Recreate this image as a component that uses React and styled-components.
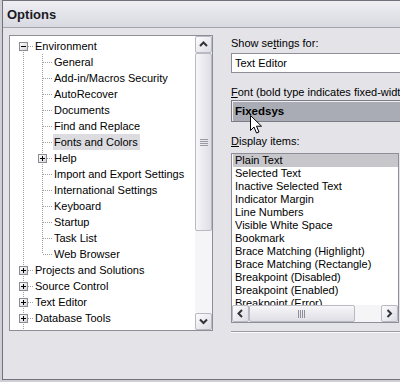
import React from 'react';
import styled, { createGlobalStyle } from 'styled-components';

const GlobalStyle = createGlobalStyle`
  html, body {
    margin: 0;
    padding: 0;
    overflow: hidden;
    background: #cfcfd5;
  }
  #root {
    width: 400px;
    height: 382px;
    overflow: hidden;
  }
  * {
    box-sizing: border-box;
  }
`;

const children = [
  'General',
  'Add-in/Macros Security',
  'AutoRecover',
  'Documents',
  'Find and Replace',
  'Fonts and Colors',
  'Help',
  'Import and Export Settings',
  'International Settings',
  'Keyboard',
  'Startup',
  'Task List',
  'Web Browser',
];

const roots = ['Projects and Solutions', 'Source Control', 'Text Editor', 'Database Tools', 'Debugging'];

const treeRows = [
  { label: 'Environment', cells: [{ bottom: true, branch: true, box: 'minus' }] },
  ...children.map((label, i) => ({
    label,
    selected: label === 'Fonts and Colors',
    cells: [
      { top: true, bottom: true },
      {
        top: true,
        bottom: i < children.length - 1,
        branch: true,
        box: label === 'Help' ? 'plus' : null,
      },
    ],
  })),
  ...roots.map(label => ({
    label,
    cells: [{ top: true, bottom: true, branch: true, box: 'plus' }],
  })),
];

const displayItems = [
  'Plain Text',
  'Selected Text',
  'Inactive Selected Text',
  'Indicator Margin',
  'Line Numbers',
  'Visible White Space',
  'Bookmark',
  'Brace Matching (Highlight)',
  'Brace Matching (Rectangle)',
  'Breakpoint (Disabled)',
  'Breakpoint (Enabled)',
  'Breakpoint (Error)',
  'Breakpoint (Warning)',
];

function Gutter({ top, bottom, branch, box }) {
  return (
    <GutterSvg width='19' height='16' shapeRendering='crispEdges'>
      {top && <line x1='9.5' y1='0' x2='9.5' y2='8' stroke='#a0a0a0' strokeDasharray='1 1' />}
      {bottom && <line x1='9.5' y1='8' x2='9.5' y2='16' stroke='#a0a0a0' strokeDasharray='1 1' />}
      {branch && <line x1='10' y1='8.5' x2='19' y2='8.5' stroke='#a0a0a0' strokeDasharray='1 1' />}
      {box && (
        <>
          <defs>
            <linearGradient id='boxFill' x1='0' y1='0' x2='1' y2='1'>
              <stop offset='0' stopColor='#ffffff' />
              <stop offset='1' stopColor='#d4d4d8' />
            </linearGradient>
          </defs>
          <rect x='5.5' y='4.5' width='8' height='8' fill='url(#boxFill)' stroke='#8a8a90' />
          <line x1='7' y1='8.5' x2='12' y2='8.5' stroke='#000' />
          {box === 'plus' && <line x1='9.5' y1='6' x2='9.5' y2='11' stroke='#000' />}
        </>
      )}
    </GutterSvg>
  );
}

function Chevron({ dir }) {
  const points = {
    up: '1,6 4.5,2.5 8,6',
    down: '1,2.5 4.5,6 8,2.5',
    left: '6,1 2.5,4.5 6,8',
    right: '2.5,1 6,4.5 2.5,8',
  }[dir];
  return (
    <svg width='9' height='9'>
      <polyline points={points} fill='none' stroke='#33333a' strokeWidth='2' />
    </svg>
  );
}

function Grip({ vertical }) {
  return vertical ? (
    <svg width='8' height='7' shapeRendering='crispEdges'>
      {[0.5, 2.5, 4.5, 6.5].map(y => (
        <line key={y} x1='0' y1={y} x2='8' y2={y} stroke={y % 2 ? '#9a9aa6' : '#fff'} />
      ))}
    </svg>
  ) : (
    <svg width='8' height='8' shapeRendering='crispEdges'>
      {[0.5, 2.5, 4.5, 6.5].map(x => (
        <line key={x} x1={x} y1='0' x2={x} y2='8' stroke='#8e8e9a' />
      ))}
    </svg>
  );
}

function Cursor() {
  return (
    <CursorSvg width='13' height='20'>
      <path
        d='M0.5 0.5 L0.5 15.5 L4 12 L6.5 18 L9 17 L6.5 11.2 L11.5 11.2 Z'
        fill='#fff'
        stroke='#000'
        strokeLinejoin='miter'
      />
    </CursorSvg>
  );
}

export default function App() {
  return (
    <>
      <GlobalStyle />
      <Window>
        <TitleBar>Options</TitleBar>
        <Body>
          <TreePanel>
            <TreeList>
              {treeRows.map(row => (
                <TreeRow key={row.label}>
                  {row.cells.map((cell, i) => (
                    <Gutter key={i} {...cell} />
                  ))}
                  <TreeLabel $selected={row.selected}>{row.label}</TreeLabel>
                </TreeRow>
              ))}
            </TreeList>
            <VScroll>
              <ScrollButton>
                <Chevron dir='up' />
              </ScrollButton>
              <VThumb>
                <Grip vertical />
              </VThumb>
              <Track />
              <ScrollButton>
                <Chevron dir='down' />
              </ScrollButton>
            </VScroll>
          </TreePanel>

          <Settings>
            <FieldLabel $top={1}>
              Show se<u>t</u>tings for:
            </FieldLabel>
            <TextBox>Text Editor</TextBox>
            <FieldLabel $top={12}>
              <u>F</u>ont (bold type indicates fixed-width fonts):
            </FieldLabel>
            <FontCombo>
              Fixedsys
              <Cursor />
            </FontCombo>
            <FieldLabel $top={12}>
              <u>D</u>isplay items:
            </FieldLabel>
            <ListBox>
              <ListItems>
                {displayItems.map((item, i) => (
                  <ListItem key={item} $selected={i === 0}>
                    {item}
                  </ListItem>
                ))}
              </ListItems>
              <HScroll>
                <ScrollButton>
                  <Chevron dir='left' />
                </ScrollButton>
                <HThumb>
                  <Grip />
                </HThumb>
                <Track />
                <ScrollButton>
                  <Chevron dir='right' />
                </ScrollButton>
              </HScroll>
            </ListBox>
            <Separator />
          </Settings>
        </Body>
      </Window>
    </>
  );
}

const Window = styled.div`
  display: flex;
  flex-direction: column;
  margin-left: 2px;
  width: 430px;
  height: 380px;
  border: 1px solid #72727c;
  background: #e3e3e8;
  font-family: 'Liberation Sans', Arial, sans-serif;
  font-size: 11px;
  color: #000;
`;

const TitleBar = styled.div`
  display: flex;
  align-items: center;
  height: 27px;
  padding: 1px 0 0 4px;
  border-bottom: 1px solid #a4a4ae;
  background: linear-gradient(#eeeef3, #d9d9e1);
  font-size: 13px;
  font-weight: bold;
  color: #1a1a22;
`;

const Body = styled.div`
  display: flex;
  align-items: flex-start;
  gap: 18px;
  padding: 7px 0 0 6px;
`;

const TreePanel = styled.div`
  display: flex;
  width: 207px;
  height: 296px;
  border: 1px solid #8e8e98;
  background: #fff;
`;

const TreeList = styled.div`
  flex: 1;
  overflow: hidden;
  padding: 2px 0 0 4px;
`;

const TreeRow = styled.div`
  display: flex;
  height: 16px;
`;

const GutterSvg = styled.svg`
  flex: none;
  display: block;
`;

const TreeLabel = styled.span`
  margin-left: 1px;
  padding: 0 2px 0 1px;
  line-height: 16px;
  white-space: nowrap;
  background: ${props => (props.$selected ? '#dcdce0' : 'transparent')};
`;

const VScroll = styled.div`
  display: flex;
  flex-direction: column;
  width: 17px;
  background: #f3f3f6;
`;

const ScrollButton = styled.div`
  display: flex;
  align-items: center;
  justify-content: center;
  flex: none;
  width: 17px;
  height: 17px;
  border: 1px solid #b9b9c4;
  border-radius: 2px;
  background: linear-gradient(135deg, #fdfdfe, #dcdce4);
`;

const VThumb = styled.div`
  display: flex;
  align-items: center;
  justify-content: center;
  height: 178px;
  border: 1px solid #b9b9c4;
  border-radius: 2px;
  background: linear-gradient(90deg, #f7f7f9, #dedee5);
`;

const Track = styled.div`
  flex: 1;
  background: #f5f5f7;
`;

const Settings = styled.div`
  display: flex;
  flex-direction: column;
  width: 200px;
`;

const FieldLabel = styled.div`
  height: 14px;
  margin-top: ${props => props.$top}px;
  line-height: 14px;
  white-space: nowrap;
  margin-bottom: ${props => (props.$top === 1 ? 3 : 1)}px;
`;

const TextBox = styled.div`
  height: 20px;
  padding-left: 3px;
  border: 1px solid #8e8e98;
  background: #fff;
  line-height: 18px;
`;

const FontCombo = styled.div`
  position: relative;
  height: 22px;
  padding-left: 3px;
  border: 1px solid #7c7c86;
  background: #a9acb4;
  box-shadow: inset 1px 1px 0 #eeeef2;
  font-size: 11.5px;
  font-weight: bold;
  line-height: 20px;
`;

const CursorSvg = styled.svg`
  position: absolute;
  left: 18px;
  top: 14px;
`;

const ListBox = styled.div`
  display: flex;
  flex-direction: column;
  width: 168px;
  height: 170px;
  margin-top: 4px;
  border: 1px solid #8e8e98;
  background: #fff;
`;

const ListItems = styled.div`
  flex: 1;
  overflow: hidden;
`;

const ListItem = styled.div`
  height: 13px;
  margin-left: 1px;
  padding-left: 2px;
  line-height: 13px;
  white-space: nowrap;
  background: ${props => (props.$selected ? '#c6c6cb' : 'transparent')};
`;

const HScroll = styled.div`
  display: flex;
  height: 17px;
  background: #f3f3f6;
`;

const HThumb = styled.div`
  display: flex;
  align-items: center;
  justify-content: center;
  width: 106px;
  border: 1px solid #b9b9c4;
  border-radius: 2px;
  background: linear-gradient(#f7f7f9, #dedee5);
`;

const Separator = styled.div`
  height: 2px;
  margin-top: 8px;
  border-top: 1px solid #9c9ca6;
  border-bottom: 1px solid #fbfbfc;
`;
